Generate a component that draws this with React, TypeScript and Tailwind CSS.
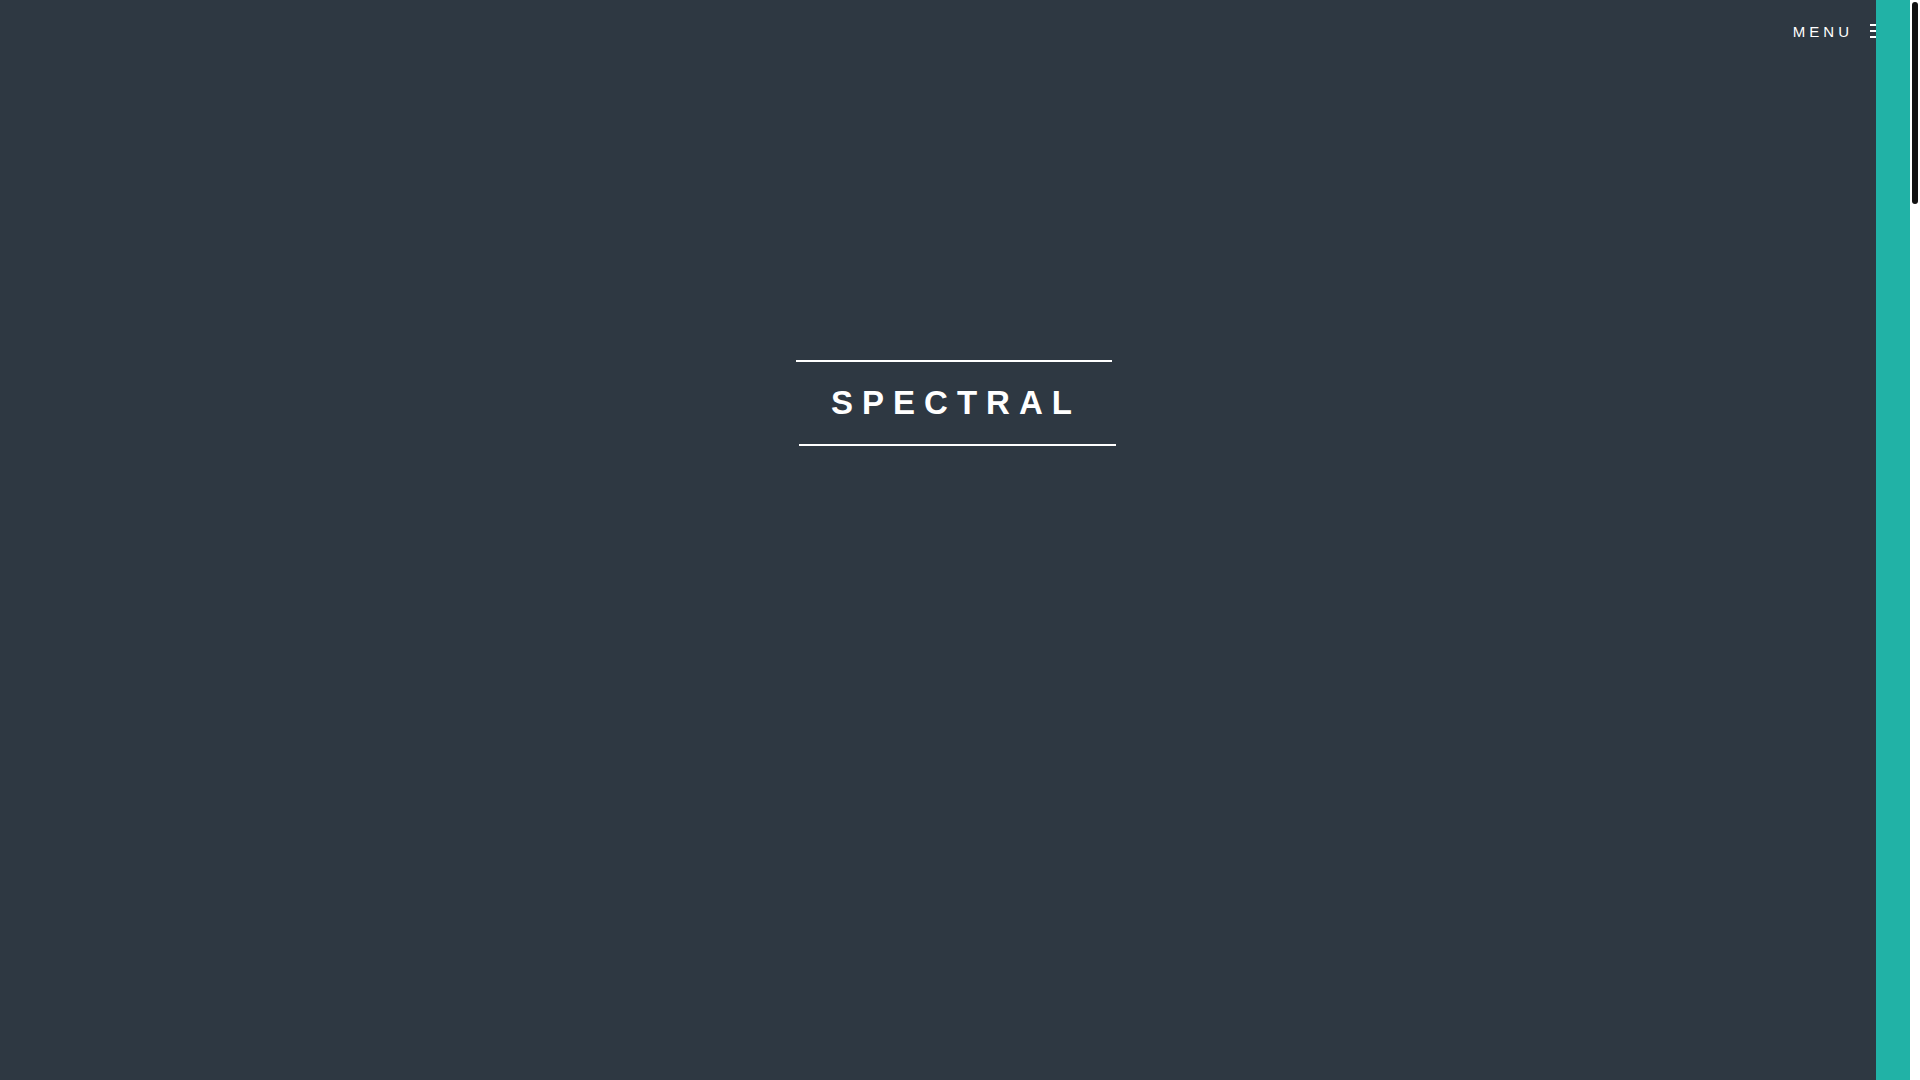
export default function App() {
  return (
    <div className="flex h-screen w-full overflow-hidden bg-white" style={{ fontFamily: '"Liberation Sans", Arial, sans-serif' }}>
      <div className="relative flex-1 bg-[#2e3842]">
        <header className="flex h-[62px] items-center justify-end gap-[17px] pr-[24px]">
          <span className="pt-[1px] text-[15px] uppercase leading-none tracking-[4px] text-white">Menu</span>
          <span className="flex w-4 flex-col gap-[4px]">
            <span className="h-[2px] w-full bg-white" />
            <span className="h-[2px] w-full bg-white" />
            <span className="h-[2px] w-full bg-white" />
          </span>
        </header>

        <section className="pt-[298px]">
          <div className="mx-auto w-[319px]">
            <div className="h-[2px] w-[316px] bg-white" />
            <h2 className="pb-[25px] pl-[2px] pt-[24px] text-center text-[33px] font-bold uppercase leading-[33px] tracking-[9px] text-white">
              Spectral
            </h2>
            <div className="ml-[3px] h-[2px] w-[317px] bg-white" />
          </div>
        </section>

        {/* side menu edge */}
        <div className="absolute bottom-0 right-0 top-0 w-[34px] bg-[#21b2a6]" />
      </div>

      {/* scrollbar */}
      <div className="w-[10px] bg-white pl-[1.5px] pt-[2px]">
        <div className="h-[202px] w-[6.5px] rounded-full bg-[#111]" />
      </div>
    </div>
  )
}
